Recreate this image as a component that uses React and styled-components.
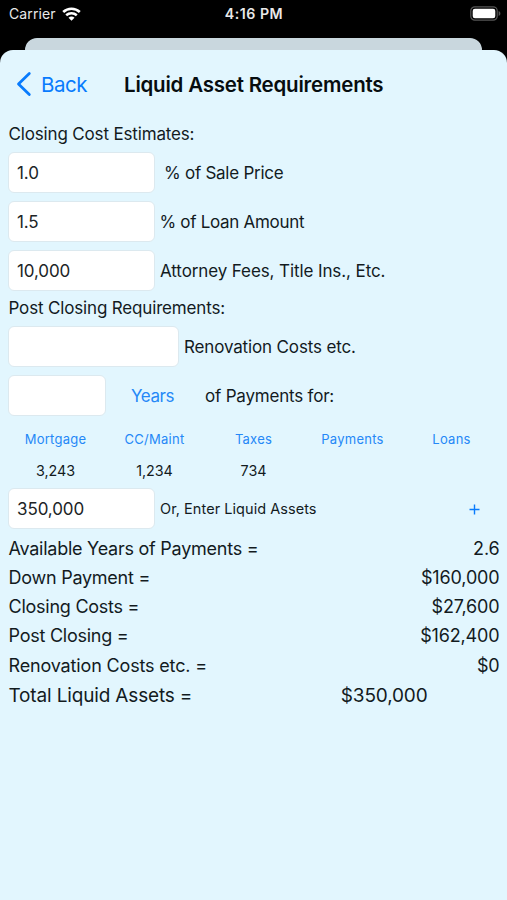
import React from "react"
import styled, { createGlobalStyle } from "styled-components"

const costs = [
  { value: "1.0", label: "% of Sale Price", indent: 9, spacing: -0.26 },
  { value: "1.5", label: "% of Loan Amount", indent: 4.5, spacing: -0.3 },
  { value: "10,000", label: "Attorney Fees, Title Ins., Etc.", indent: 5, spacing: -0.1 },
]

const payments = [
  { name: "Mortgage", amount: "3,243" },
  { name: "CC/Maint", amount: "1,234" },
  { name: "Taxes", amount: "734" },
  { name: "Payments", amount: "" },
  { name: "Loans", amount: "" },
]

const totals = [
  { label: "Available Years of Payments =", value: "2.6" },
  { label: "Down Payment =", value: "$160,000" },
  { label: "Closing Costs =", value: "$27,600" },
  { label: "Post Closing =", value: "$162,400" },
  { label: "Renovation Costs etc. =", value: "$0", spacing: -0.16 },
]

function WifiIcon() {
  return (
    <svg width="19" height="14" viewBox="0 0 19 14" fill="none" stroke="#fff">
      <path d="M1.2 5C5.9.6 13.1.6 17.8 5" strokeWidth="2.6" />
      <path d="M4.2 8.2c3-2.7 7.6-2.7 10.6 0" strokeWidth="2.5" />
      <path d="M9.5 13.7 6.5 10.7c1.6-1.5 4.4-1.5 6 0z" fill="#fff" stroke="none" />
    </svg>
  )
}

function BatteryIcon() {
  return (
    <svg width="31" height="15" viewBox="0 0 31 15">
      <rect x="0.8" y="0.8" width="26.4" height="13.4" rx="4" fill="none" stroke="#565656" strokeWidth="1.2" />
      <rect x="2.7" y="2.7" width="22.6" height="9.6" rx="2.2" fill="#fff" />
      <path d="M28.6 5v5c1.2-.5 1.8-1.4 1.8-2.5S29.8 5.5 28.6 5z" fill="#565656" />
    </svg>
  )
}

export default function App() {
  return (
    <Screen>
      <GlobalStyle />
      <StatusBar>
        <Carrier>
          Carrier
          <WifiIcon />
        </Carrier>
        <Clock>4:16 PM</Clock>
        <Battery>
          <BatteryIcon />
        </Battery>
      </StatusBar>
      <SheetBehind />
      <Sheet>
        <NavBar>
          <BackButton>
            <svg width="16" height="26" viewBox="0 0 16 26">
              <path d="M13.3 2.5 2.5 13l10.8 10.5" fill="none" stroke="#087bfd" strokeWidth="2.8" strokeLinecap="round" strokeLinejoin="round" />
            </svg>
            <span>Back</span>
          </BackButton>
          <Title>Liquid Asset Requirements</Title>
        </NavBar>

        <SectionLabel>Closing Cost Estimates:</SectionLabel>
        {costs.map(cost => (
          <FieldRow key={cost.label}>
            <Field defaultValue={cost.value} $width={147} />
            <FieldLabel $indent={cost.indent} $spacing={cost.spacing}>
              {cost.label}
            </FieldLabel>
          </FieldRow>
        ))}

        <SectionLabel $post>Post Closing Requirements:</SectionLabel>
        <FieldRow>
          <Field $width={171} />
          <FieldLabel $indent={5} $spacing={-0.15}>
            Renovation Costs etc.
          </FieldLabel>
        </FieldRow>
        <FieldRow>
          <Field $width={98} />
          <YearsButton>Years</YearsButton>
          <FieldLabel $spacing={-0.2}>of Payments for:</FieldLabel>
        </FieldRow>

        <PaymentGrid>
          {payments.map(({ name }) => (
            <PaymentButton key={name}>{name}</PaymentButton>
          ))}
          {payments.map(({ name, amount }) => (
            <Amount key={name}>{amount}</Amount>
          ))}
        </PaymentGrid>

        <FieldRow>
          <Field defaultValue="350,000" $width={147} />
          <SmallLabel>Or, Enter Liquid Assets</SmallLabel>
          <AddButton>
            <svg width="11" height="11" viewBox="0 0 11 11">
              <path d="M5.5.5v10M.5 5.5h10" stroke="#087bfd" strokeWidth="1.4" />
            </svg>
          </AddButton>
        </FieldRow>

        <Totals>
          {totals.map(total => (
            <TotalRow key={total.label}>
              <TotalLabel $spacing={total.spacing}>{total.label}</TotalLabel>
              <TotalValue>{total.value}</TotalValue>
            </TotalRow>
          ))}
          <GrandTotal>
            <TotalLabel $spacing={-0.16}>Total Liquid Assets =</TotalLabel>
            <TotalValue>$350,000</TotalValue>
          </GrandTotal>
        </Totals>
      </Sheet>
    </Screen>
  )
}

const GlobalStyle = createGlobalStyle`
  * {
    box-sizing: border-box;
  }

  body {
    margin: 0;
    background: #000;
    color: #131b1e;
    font-family: Inter, "Liberation Sans", sans-serif;
  }

  button {
    border: 0;
    padding: 0;
    background: none;
    color: #2588f7;
    font-family: inherit;
  }
`

const Screen = styled.main`
  display: flex;
  flex-direction: column;
  width: 507px;
  height: 900px;
  overflow: hidden;
  background: #000;
`

const StatusBar = styled.header`
  display: grid;
  grid-template-columns: 1fr auto 1fr;
  align-items: center;
  height: 27px;
  margin-bottom: 11px;
  padding: 0 6px 0 9px;
  color: #e9e9e9;
`

const Carrier = styled.div`
  display: flex;
  align-items: center;
  gap: 6px;
  font-size: 14px;
  letter-spacing: 0.1px;
`

const Clock = styled.div`
  padding-right: 2px;
  font-size: 14.2px;
  font-weight: 600;
  letter-spacing: 0.5px;
`

const Battery = styled.div`
  display: flex;
  justify-content: flex-end;
`

const SheetBehind = styled.div`
  flex: none;
  height: 12px;
  margin: 0 25px;
  border-radius: 12px 12px 0 0;
  background: #c9d7de;
`

const Sheet = styled.section`
  flex: 1;
  padding: 0 8px;
  border-radius: 13px 13px 0 0;
  background: #e2f6fe;
`

const NavBar = styled.nav`
  display: flex;
  align-items: center;
  height: 68px;
`

const BackButton = styled.button`
  display: flex;
  align-items: center;
  gap: 9px;
  width: 116px;
  padding-left: 8px;
  color: #087bfd;
  font-size: 20.5px;
  letter-spacing: -0.45px;
`

const Title = styled.h1`
  margin: 0;
  color: #070d0f;
  font-size: 20.5px;
  font-weight: 600;
  letter-spacing: -0.21px;
  white-space: nowrap;
`

const SectionLabel = styled.h2`
  height: ${props => (props.$post ? 27 : 34)}px;
  margin: 0 0 0 0.5px;
  font-size: 17px;
  font-weight: 400;
  line-height: ${props => (props.$post ? 19 : 32)}px;
  letter-spacing: -0.16px;
`

const FieldRow = styled.div`
  display: flex;
  align-items: center;
  height: 41px;
  margin-bottom: 8px;
`

const Field = styled.input`
  width: ${props => props.$width}px;
  height: 41px;
  padding: 0 8px;
  border: 1px solid #dce9ef;
  border-radius: 6px;
  outline: 0;
  background: #fff;
  color: #202426;
  font-family: inherit;
  font-size: 17px;
  letter-spacing: -0.1px;
`

const FieldLabel = styled.label`
  margin-left: ${props => props.$indent || 0}px;
  font-size: 17px;
  letter-spacing: ${props => props.$spacing || 0}px;
  white-space: nowrap;
`

const YearsButton = styled.button`
  width: 99px;
  padding-right: 6px;
  font-size: 17px;
  letter-spacing: -0.4px;
`

const PaymentGrid = styled.div`
  display: grid;
  grid-template-columns: repeat(5, 1fr);
  grid-template-rows: 29px 34px;
  align-items: center;
  height: 64px;
  margin: 0 -2px;
  text-align: center;
`

const PaymentButton = styled.button`
  font-size: 13px;
  letter-spacing: 0.25px;
`

const Amount = styled.span`
  font-size: 14.3px;
`

const SmallLabel = styled.label`
  margin-left: 5px;
  font-size: 14.5px;
  letter-spacing: 0.05px;
`

const AddButton = styled.button`
  display: flex;
  margin: 2px 19px 0 auto;
`

const Totals = styled.div`
  margin-top: -3.5px;
`

const TotalRow = styled.div`
  display: flex;
  justify-content: space-between;
  height: 29.25px;
  font-size: 18px;
  line-height: 29px;
`

const TotalLabel = styled.span`
  padding-left: 0.5px;
  letter-spacing: ${props => props.$spacing || -0.25}px;
`

const TotalValue = styled.span`
  margin-right: -0.5px;
  letter-spacing: -0.15px;
`

const GrandTotal = styled(TotalRow)`
  padding-right: 72px;
  font-size: 19px;
  line-height: 31px;
`
